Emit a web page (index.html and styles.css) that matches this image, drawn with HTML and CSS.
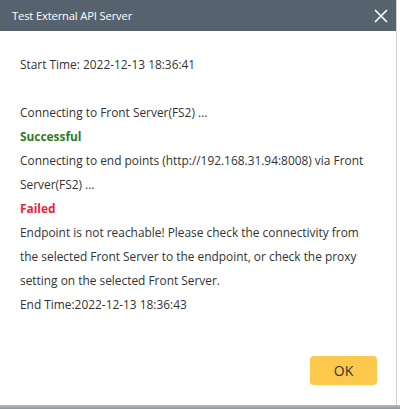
FILE: index.html
```html
<!DOCTYPE html>
<html>
<head>
<meta charset="utf-8">
<link rel="stylesheet" href="styles.css">
</head>
<body>
<div class="page">
  <div class="dialog">
    <div class="header">
      <span class="title">Test External API Server</span>
      <span class="close">
        <svg width="14" height="14" viewBox="0 0 14 14"><path d="M1 1L13 13M13 1L1 13" stroke="#ffffff" stroke-width="1.6" fill="none"/></svg>
      </span>
    </div>
    <div class="content">
      <div class="line">Start Time: 2022-12-13 18:36:41</div>
      <div class="line">&nbsp;</div>
      <div class="line">Connecting to Front Server(FS2) ...</div>
      <div class="line ok">Successful</div>
      <div class="line">Connecting to end points (http://192.168.31.94:8008) via Front Server(FS2) ...</div>
      <div class="line fail">Failed</div>
      <div class="line">Endpoint is not reachable! Please check the connectivity from the selected Front Server to the endpoint, or check the proxy setting on the selected Front Server.</div>
      <div class="line">End Time:2022-12-13 18:36:43</div>
    </div>
    <div class="footer">
      <button class="btn">OK</button>
    </div>
  </div>
  <div class="edge"></div>
</div>
<div class="shadow"></div>
</body>
</html>
```
FILE: styles.css
```css
html, body {
  margin: 0;
  padding: 0;
  background: #ffffff;
  width: 400px;
  height: 409px;
  overflow: hidden;
}
.page {
  display: flex;
  height: 405px;
}
.dialog {
  width: 397px;
  height: 405px;
  display: flex;
  flex-direction: column;
  background: #ffffff;
  font-family: "Open Sans", "Noto Sans", sans-serif;
}
.edge {
  width: 3px;
  background: #ffffff;
  border-left: 1px solid #d0d0d0;
}
.header {
  height: 31px;
  background: #56636f;
  display: flex;
  align-items: center;
  justify-content: space-between;
  padding: 0 8px 0 12px;
  flex-shrink: 0;
}
.title {
  color: #ffffff;
  font-size: 11.2px;
  letter-spacing: -0.15px;
}
.close {
  display: flex;
  align-items: center;
}
.content {
  flex: 1;
  padding: 21px 20px 0 20px;
  color: #333333;
  font-size: 11.9px;
  line-height: 24px;
}
.ok {
  color: #2f7d1f;
  font-weight: bold;
}
.fail {
  color: #f01c3c;
  font-weight: bold;
}
.footer {
  display: flex;
  justify-content: flex-end;
  padding: 0 19px 20px 0;
}
.btn {
  width: 67px;
  height: 29px;
  border: none;
  border-radius: 4px;
  background: #fcc94c;
  color: #333333;
  font-family: "Open Sans", "Noto Sans", sans-serif;
  font-size: 14px;
  padding: 0;
}
.shadow {
  height: 4px;
  background: linear-gradient(#b8bcc0, #8e959b);
}
```
